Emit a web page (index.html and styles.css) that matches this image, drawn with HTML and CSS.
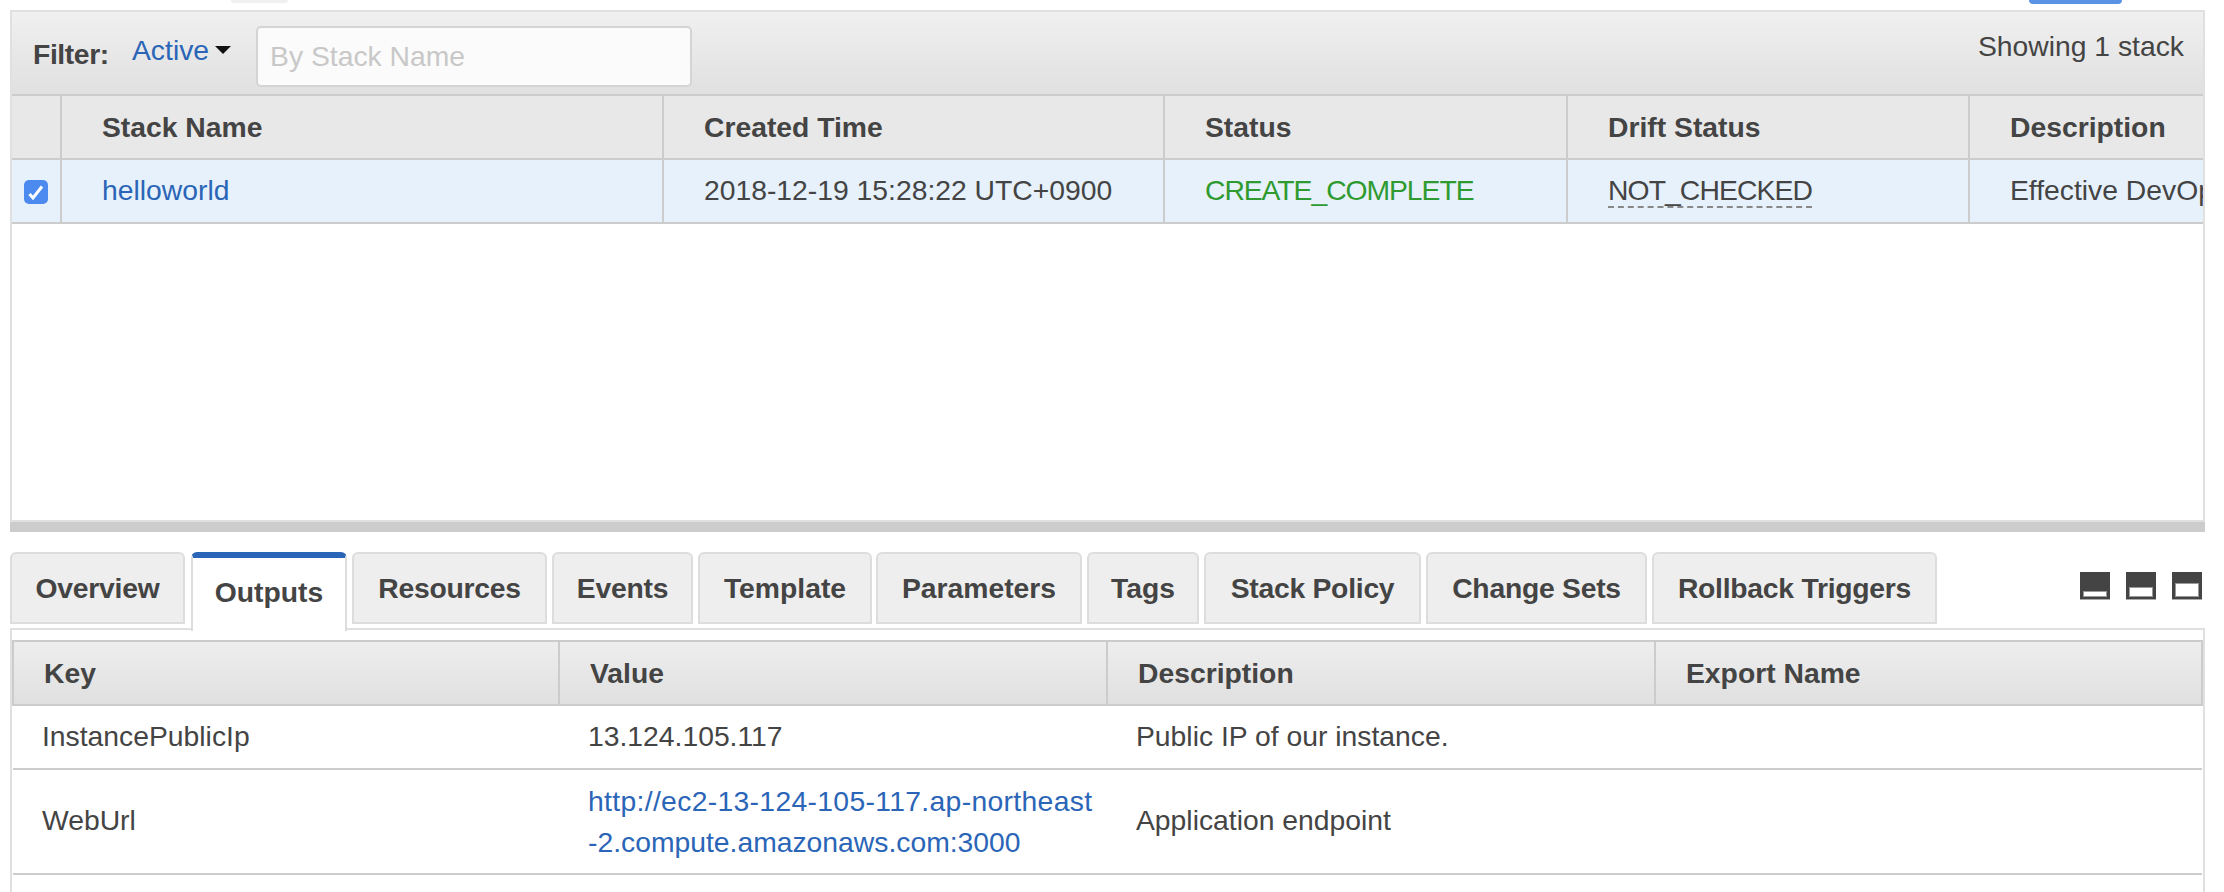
FILE: index.html
```html
<!DOCTYPE html>
<html lang="en">
<head>
  <meta charset="UTF-8">
  <title>CloudFormation Stacks</title>
  <link rel="stylesheet" href="styles.css">
</head>
<body>
  <div class="top-strip">
    <div class="top-pill"></div>
    <div class="top-button"></div>
  </div>

  <div class="stacks-panel">
    <div class="toolbar">
      <div class="filter">
        <span class="filter-label">Filter:</span>
        <a class="filter-active">Active</a>
        <span class="caret"></span>
        <input class="filter-input" type="text" placeholder="By Stack Name">
      </div>
      <div class="stack-count">Showing 1 stack</div>
    </div>
    <table class="stacks-table">
      <colgroup>
        <col class="col-check"><col class="col-name"><col class="col-time"><col class="col-status"><col class="col-drift"><col class="col-desc">
      </colgroup>
      <thead>
        <tr>
          <th></th>
          <th>Stack Name</th>
          <th>Created Time</th>
          <th>Status</th>
          <th>Drift Status</th>
          <th>Description</th>
        </tr>
      </thead>
      <tbody>
        <tr>
          <td class="check-cell">
            <span class="checkbox">
              <svg width="24" height="24" viewBox="0 0 24 24"><path d="M5.5 14 L9 18 L18 6.5" fill="none" stroke="#fff" stroke-width="3"/></svg>
            </span>
          </td>
          <td><a class="link">helloworld</a></td>
          <td>2018-12-19 15:28:22 UTC+0900</td>
          <td class="status-ok">CREATE_COMPLETE</td>
          <td><span class="drift">NOT_CHECKED</span></td>
          <td>Effective DevOps with AWS</td>
        </tr>
      </tbody>
    </table>
  </div>

  <div class="resize-bar"></div>

  <div class="tabs-row">
    <div class="tabs">
      <div class="tab tab-overview">Overview</div>
      <div class="tab tab-active">Outputs</div>
      <div class="tab tab-resources">Resources</div>
      <div class="tab tab-events">Events</div>
      <div class="tab tab-template">Template</div>
      <div class="tab tab-parameters">Parameters</div>
      <div class="tab tab-tags">Tags</div>
      <div class="tab tab-policy">Stack Policy</div>
      <div class="tab tab-changes">Change Sets</div>
      <div class="tab tab-rollback">Rollback Triggers</div>
    </div>
    <div class="view-icons">
      <svg width="30" height="28" viewBox="0 0 30 28"><rect width="30" height="27" fill="#444"/><rect y="27" width="30" height="1" fill="#aaa"/><rect x="3.5" y="19.5" width="23" height="5" fill="#fff" stroke="#999"/></svg>
      <svg width="30" height="28" viewBox="0 0 30 28"><rect width="30" height="27" fill="#444"/><rect y="27" width="30" height="1" fill="#aaa"/><rect x="3.5" y="15.5" width="23" height="9" fill="#fff" stroke="#999"/></svg>
      <svg width="30" height="28" viewBox="0 0 30 28"><rect width="30" height="27" fill="#444"/><rect y="27" width="30" height="1" fill="#aaa"/><rect x="3.5" y="11.5" width="23" height="13" fill="#fff" stroke="#999"/></svg>
    </div>
  </div>

  <div class="outputs-panel">
    <table class="outputs-table">
      <colgroup>
        <col class="col-key"><col class="col-value"><col class="col-about"><col class="col-export">
      </colgroup>
      <thead>
        <tr>
          <th>Key</th>
          <th>Value</th>
          <th>Description</th>
          <th>Export Name</th>
        </tr>
      </thead>
      <tbody>
        <tr>
          <td>InstancePublicIp</td>
          <td>13.124.105.117</td>
          <td>Public IP of our instance.</td>
          <td></td>
        </tr>
        <tr class="row-tall">
          <td>WebUrl</td>
          <td class="url-cell"><a class="link"><span class="url-first">http://ec2-13-124-105-117.ap-northeast</span><br>-2.compute.amazonaws.com:3000</a></td>
          <td>Application endpoint</td>
          <td></td>
        </tr>
      </tbody>
    </table>
  </div>
</body>
</html>
```

FILE: styles.css
```css
html, body {
  margin: 0;
  height: 892px;
  overflow: hidden;
  background: #fff;
}

body {
  font-family: "Liberation Sans", Arial, sans-serif;
  font-size: 28.3px;
  color: #444;
}

table {
  border-collapse: collapse;
  table-layout: fixed;
}

.link, .filter-active {
  color: #2a65b7;
}

.top-strip {
  height: 10px;
  display: flex;
  align-items: flex-start;
}

.top-pill {
  width: 57px;
  height: 3px;
  margin-left: 231px;
  background: #f0f0f0;
  border-radius: 0 0 6px 6px;
}

.top-button {
  width: 93px;
  height: 4px;
  margin-left: 1741px;
  background: #5a92e6;
  border-radius: 0 0 5px 5px;
}

/* upper panel */
.stacks-panel {
  height: 510px;
  margin-left: 10px;
  width: 2195px;
  box-sizing: border-box;
  border: solid #e0e0e0;
  border-width: 2px 2px 0 2px;
  overflow: hidden;
}

.toolbar {
  height: 82px;
  box-sizing: border-box;
  padding: 0 19px 0 21px;
  display: flex;
  justify-content: space-between;
  background: linear-gradient(#f0f0f0, #e0e0e0);
}

.filter {
  display: flex;
  align-items: center;
}

.filter-label {
  font-weight: bold;
  width: 99px;
  margin-top: 2px;
  letter-spacing: -0.4px;
}

.filter-active {
  margin-top: -5px;
}

.caret {
  width: 0;
  height: 0;
  margin: -6px 0 0 6px;
  border: solid transparent;
  border-width: 8px 8px 0 8px;
  border-top-color: #111;
}

.filter-input {
  width: 436px;
  height: 61px;
  box-sizing: border-box;
  margin: 7px 0 0 25px;
  padding: 0 12px;
  border: 2px solid #d4d4d4;
  border-radius: 5px;
  background: #fbfbfb;
  font: inherit;
  color: #444;
}

.filter-input::placeholder {
  color: #c8c8c8;
}

.stack-count {
  padding-top: 18px;
}

.stacks-table {
  width: 2400px;
}

.col-check { width: 49px; }
.col-name { width: 602px; }
.col-time { width: 501px; }
.col-status { width: 403px; }
.col-drift { width: 402px; }
.col-desc { width: 443px; }

.stacks-table th, .stacks-table td {
  padding: 0 0 0 40px;
  border: 2px solid #ccc;
  border-width: 2px 0 2px 2px;
  text-align: left;
  white-space: nowrap;
  overflow: hidden;
}

.stacks-table th:first-child, .stacks-table td:first-child {
  border-left: none;
  padding: 0;
}

.stacks-table th {
  height: 61px;
  padding-top: 1px;
  background: #e8e8e8;
}

.stacks-table td {
  height: 60px;
  padding-bottom: 2px;
  background: #e6f1fc;
}

.check-cell {
  text-align: center;
}

.checkbox {
  width: 24px;
  height: 24px;
  margin: 2px 0 0 12px;
  background: #4d8af0;
  border-radius: 5px;
  display: block;
}

.checkbox svg {
  display: block;
}

.status-ok {
  color: #2f9a2f;
  letter-spacing: -1.04px;
}

.drift {
  letter-spacing: -0.9px;
  border-bottom: 2px dashed #888;
}

.resize-bar {
  height: 12px;
  margin-left: 10px;
  width: 2195px;
  box-sizing: border-box;
  border-top: 2px solid #e0e0e0;
  background: #ccc;
}

/* tabs */
.tabs-row {
  margin: 20px 0 0 10px;
  width: 2195px;
  height: 76px;
  display: flex;
  justify-content: space-between;
}

.tabs {
  display: flex;
  align-items: flex-start;
  position: relative;
  z-index: 1;
}

.tab {
  height: 72px;
  box-sizing: border-box;
  margin-right: 4px;
  background: #eee;
  border: 2px solid #ddd;
  border-radius: 6px 6px 0 0;
  font-weight: bold;
  line-height: 68px;
  text-align: center;
  letter-spacing: -0.25px;
}

.tab-overview { width: 175px; margin-right: 6px; }
.tab-active {
  width: 156px;
  height: 79px;
  margin-right: 5px;
  background: #fff;
  border-top: 6px solid #2a65b7;
  border-bottom: none;
  line-height: 68px;
  letter-spacing: 0;
}
.tab-resources { width: 195px; margin-right: 5px; }
.tab-events { width: 141px; margin-right: 5px; }
.tab-template { width: 174px; letter-spacing: 0; }
.tab-parameters { width: 206px; margin-right: 5px; letter-spacing: 0; }
.tab-tags { width: 112px; margin-right: 5px; letter-spacing: 0; }
.tab-policy { width: 217px; margin-right: 5px; }
.tab-changes { width: 221px; margin-right: 5px; }
.tab-rollback { width: 285px; margin-right: 0; }

.view-icons {
  display: flex;
  gap: 16px;
  padding: 20px 3px 0 0;
}

/* lower panel */
.outputs-panel {
  margin-left: 10px;
  width: 2195px;
  height: 264px;
  box-sizing: border-box;
  padding-top: 10px;
  border: solid #e0e0e0;
  border-width: 2px 2px 0 2px;
}

.col-key { width: 546px; }
.col-value { width: 548px; }
.col-about { width: 548px; }
.col-export { width: 547px; }

.outputs-table {
  width: 2189px;
}

.outputs-table th {
  height: 62px;
  padding: 0 0 0 30px;
  border: 2px solid #ccc;
  background: linear-gradient(#eee, #e0e0e0);
  text-align: left;
}

.outputs-table td {
  height: 60px;
  padding: 0 0 2px 29px;
  border-bottom: 2px solid #ccc;
  white-space: nowrap;
}

.outputs-table .row-tall td {
  height: 101px;
  line-height: 41px;
}

.outputs-table .url-cell {
  padding-bottom: 0;
}

.url-first {
  letter-spacing: 0.33px;
}
```
